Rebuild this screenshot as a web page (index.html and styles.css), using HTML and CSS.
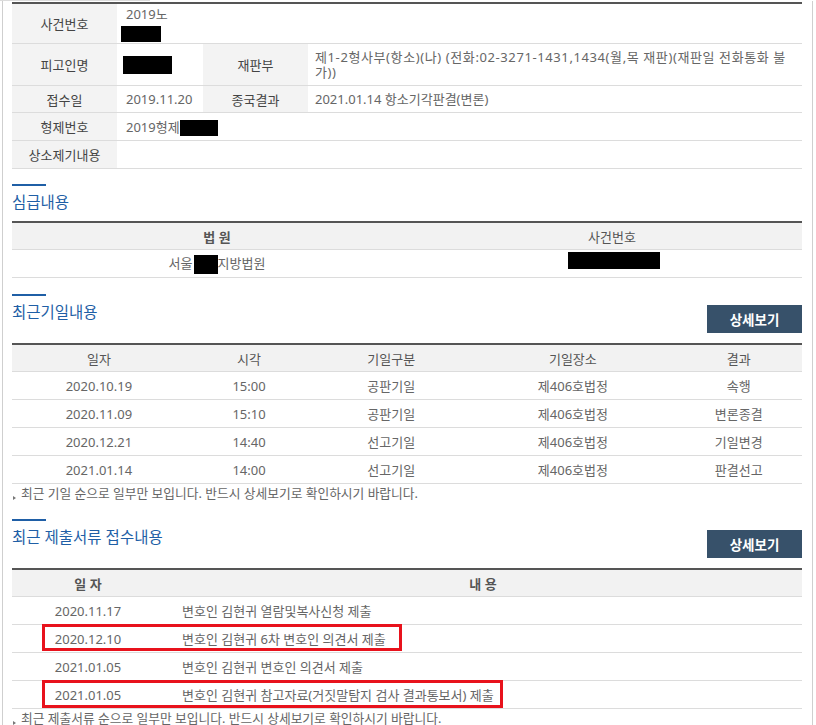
FILE: index.html
```html
<!DOCTYPE html>
<html lang="ko">
<head>
<meta charset="utf-8">
<title>사건일반내용</title>
<link rel="stylesheet" href="styles.css">
</head>
<body>
<div class="topline"></div>
<div class="frame">
  <table class="tbl info">
    <colgroup><col class="c-lbl"><col class="c-v1"><col class="c-lbl"><col></colgroup>
    <tr class="r1"><th>사건번호</th><td class="v1">2019노<br><span class="redact rd-case"></span></td><td></td><td></td></tr>
    <tr class="r2"><th>피고인명</th><td class="v1"><span class="redact rd-name"></span></td><th>재판부</th><td class="v2 court-name">제1-2형사부(항소)(나) (전화:02-3271-1431,1434(월,목 재판)(재판일 전화통화 불가))</td></tr>
    <tr class="r3"><th>접수일</th><td class="v1">2019.11.20</td><th>종국결과</th><td class="v2">2021.01.14 항소기각판결(변론)</td></tr>
    <tr class="r4"><th>형제번호</th><td class="v1" colspan="3">2019형제<span class="redact rd-pros"></span></td></tr>
    <tr class="r5"><th>상소제기내용</th><td colspan="3"></td></tr>
  </table>

  <section class="sec sec-first">
    <div class="sec-head">
      <div class="sec-title"><h2>심급내용</h2></div>
    </div>
    <table class="tbl grid courts">
      <colgroup><col class="c-court"><col></colgroup>
      <tr><th class="bold">법 원</th><th>사건번호</th></tr>
      <tr><td>서울<span class="redact rd-court"></span>지방법원</td><td><span class="redact rd-lower"></span></td></tr>
    </table>
  </section>

  <section class="sec sec-mid">
    <div class="sec-head">
      <div class="sec-title"><h2>최근기일내용</h2></div>
      <span class="btn">상세보기</span>
    </div>
    <table class="tbl grid dates">
      <colgroup><col class="d1"><col class="d2"><col class="d3"><col class="d4"><col class="d5"></colgroup>
      <tr><th>일자</th><th>시각</th><th>기일구분</th><th>기일장소</th><th>결과</th></tr>
      <tr><td>2020.10.19</td><td>15:00</td><td>공판기일</td><td>제406호법정</td><td>속행</td></tr>
      <tr><td>2020.11.09</td><td>15:10</td><td>공판기일</td><td>제406호법정</td><td>변론종결</td></tr>
      <tr><td>2020.12.21</td><td>14:40</td><td>선고기일</td><td>제406호법정</td><td>기일변경</td></tr>
      <tr><td>2021.01.14</td><td>14:00</td><td>선고기일</td><td>제406호법정</td><td>판결선고</td></tr>
    </table>
    <p class="note"><span class="tri"></span>최근 기일 순으로 일부만 보입니다. 반드시 상세보기로 확인하시기 바랍니다.</p>
  </section>

  <section class="sec sec-last">
    <div class="sec-head">
      <div class="sec-title"><h2>최근 제출서류 접수내용</h2></div>
      <span class="btn">상세보기</span>
    </div>
    <div class="tbl-wrap">
      <table class="tbl grid docs">
        <colgroup><col class="s1"><col></colgroup>
        <tr><th class="bold">일 자</th><th class="bold">내 용</th></tr>
        <tr><td>2020.11.17</td><td class="txt">변호인 김현귀 열람및복사신청 제출</td></tr>
        <tr><td>2020.12.10</td><td class="txt">변호인 김현귀 6차 변호인 의견서 제출</td></tr>
        <tr><td>2021.01.05</td><td class="txt">변호인 김현귀 변호인 의견서 제출</td></tr>
        <tr><td>2021.01.05</td><td class="txt">변호인 김현귀 참고자료(거짓말탐지 검사 결과통보서) 제출</td></tr>
      </table>
      <div class="mark mark-1"></div>
      <div class="mark mark-2"></div>
    </div>
    <p class="note"><span class="tri"></span>최근 제출서류 순으로 일부만 보입니다. 반드시 상세보기로 확인하시기 바랍니다.</p>
  </section>
</div>
</body>
</html>
```

FILE: styles.css
```css
* { box-sizing: border-box; }

body {
  margin: 0;
  background: #fff;
  color: #666;
  font-family: "Noto Sans", "Noto Sans CJK KR", sans-serif;
  font-size: 13px;
}

.topline {
  width: 150px;
  height: 1px;
  background: #dcdcdc;
}

.frame {
  margin-left: 2px;
  width: 811px;
  padding: 1px 10px 0 9px;
  border-left: 1px solid #cfcfcf;
  border-right: 1px solid #cfcfcf;
}

table {
  width: 100%;
  border-collapse: separate;
  border-spacing: 0;
  table-layout: fixed;
}

.tbl { border-top: 2px solid #555; }

.tbl th,
.tbl td {
  border-bottom: 1px solid #dcdcdc;
  vertical-align: middle;
  padding: 0;
}

.tbl th {
  font-weight: normal;
}

/* top info table */
.c-lbl { width: 105px; }
.c-v1 { width: 86px; }

.info th {
  background: #f3f3f3;
  color: #444;
  text-align: center;
}

.info td {
  text-align: left;
  color: #666;
}

.info td.v1 { padding-left: 9px; }
.info td.v2 { padding: 0 6px 0 7px; line-height: 15px; }
.info td.court-name { letter-spacing: 0.6px; padding-top: 1px; word-break: break-all; }

.info .r1 th, .info .r1 td { height: 40px; }
.info .r1 td.v1 { line-height: 17px; padding-top: 1px; }
.info .r2 th, .info .r2 td { height: 42px; }
.info .r3 th, .info .r3 td { height: 27px; }
.info .r4 th, .info .r4 td { height: 28px; }
.info .r5 th, .info .r5 td { height: 28px; }

.redact {
  display: inline-block;
  background: #000;
  vertical-align: middle;
}

.rd-case { width: 40px; height: 16px; margin-left: -5px; margin-top: 1px; }
.rd-name { width: 49px; height: 18px; margin-left: -3px; }
.rd-pros { width: 38px; height: 16px; }
.rd-court { width: 24px; height: 19px; margin-left: 1px; }
.rd-lower { width: 92px; height: 17px; margin-left: 4px; vertical-align: 2px; }

/* sections */
.sec { margin-top: 16px; }
.sec-first { margin-top: 15px; }
.sec-last { margin-top: 17px; }

.sec-head {
  display: flex;
  justify-content: space-between;
  align-items: flex-start;
}

.sec-title::before {
  content: "";
  display: block;
  width: 34px;
  height: 2px;
  background: #1f5fa6;
}

.sec-title h2 {
  margin: 6px 0 0;
  font-size: 15.5px;
  line-height: 21px;
  font-weight: normal;
  color: #1f5fa6;
}

.btn {
  margin-top: 11px;
  width: 95px;
  height: 28px;
  display: flex;
  align-items: center;
  justify-content: center;
  background: #37516a;
  color: #fff;
  font-weight: bold;
  font-size: 13.5px;
}

.sec-head + table,
.sec-head + .tbl-wrap { margin-top: 10px; }
.sec-first .sec-head + table { margin-top: 8px; }

/* grid tables */
.grid th {
  background: #f2f2f2;
  color: #555;
  height: 27px;
  text-align: center;
}

.grid th.bold { font-weight: bold; }

.grid td {
  height: 28px;
  text-align: center;
  color: #666;
}

.c-court { width: 410px; }

.d1 { width: 22%; }
.d2 { width: 16%; }
.d3 { width: 20%; }
.d4 { width: 26%; }
.d5 { width: 16%; }

.s1 { width: 152px; }
.docs td.txt { text-align: left; padding-left: 18px; }

.note {
  margin: 0;
  height: 18px;
  line-height: 18px;
  font-size: 12.75px;
  color: #666;
  white-space: nowrap;
}

.tri {
  display: inline-block;
  width: 0;
  height: 0;
  margin: 0 5px 0 1px;
  border-left: 3px solid #777;
  border-top: 2px solid transparent;
  border-bottom: 2px solid transparent;
  vertical-align: -2px;
}

/* annotation overlay */
.tbl-wrap { position: relative; }

.mark {
  position: absolute;
  left: 30px;
  border: 3px solid #e8121c;
}

.mark-1 { top: 56px; width: 360px; height: 27px; }
.mark-2 { top: 112px; width: 461px; height: 28px; }
```
